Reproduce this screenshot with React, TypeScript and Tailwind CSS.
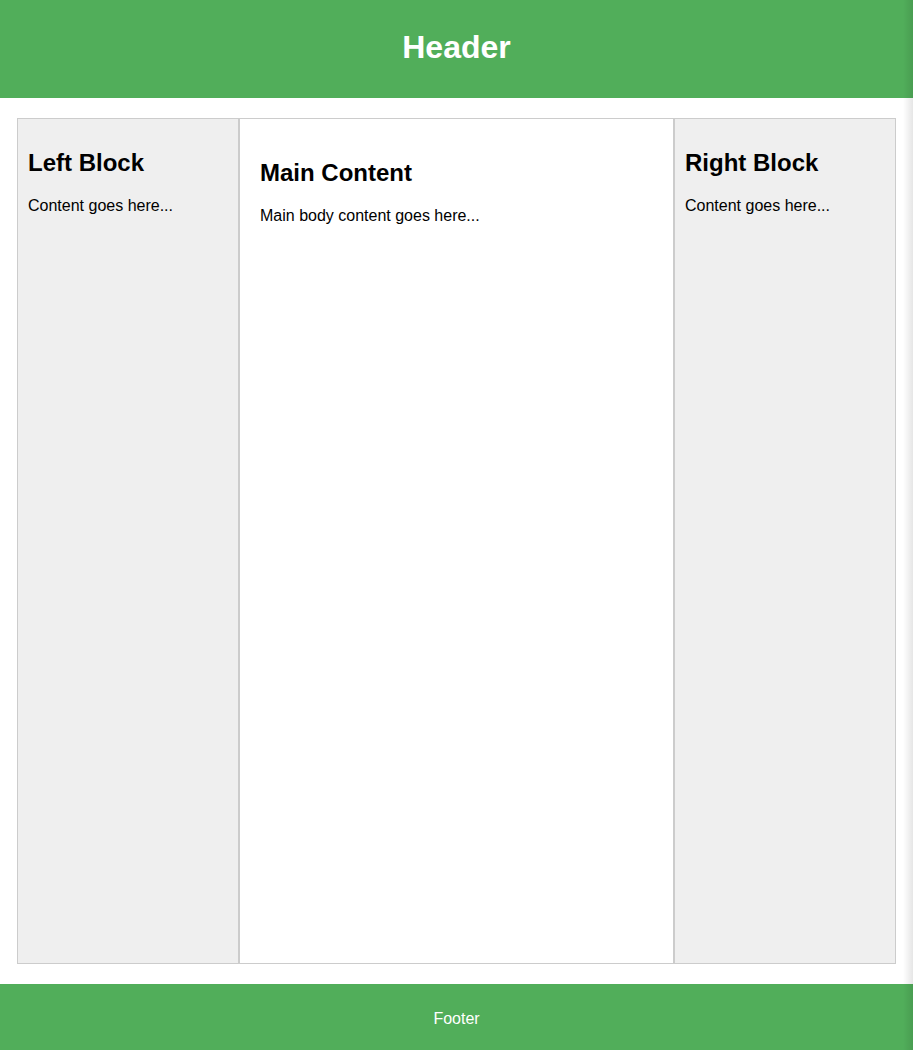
export default function App() {
  return (
    <div className="relative w-full min-h-[1050px] bg-white text-black" style={{ fontFamily: '"Liberation Sans", Arial, sans-serif' }}>
      <header className="h-[98px] bg-[#51ae5a] flex items-center justify-center pb-[4px]">
        <h1 className="text-[32px] font-bold text-white leading-none">Header</h1>
      </header>
      <div className="px-[17px] pt-[20px] pb-[20px]">
        <div className="flex h-[846px]">
          <div className="w-[222px] shrink-0 border border-[#cccccc] bg-[#efefef] px-[10px] pt-[30px]">
            <h2 className="text-[24px] font-bold leading-[28px]">Left Block</h2>
            <p className="mt-[20px] text-[16px] leading-[18px]">Content goes here...</p>
          </div>
          <div className="w-[435px] shrink-0 border border-[#cccccc] bg-white px-[20px] pt-[40px]">
            <h2 className="text-[24px] font-bold leading-[28px]">Main Content</h2>
            <p className="mt-[20px] text-[16px] leading-[18px]">Main body content goes here...</p>
          </div>
          <div className="flex-1 border border-[#cccccc] bg-[#efefef] px-[10px] pt-[30px]">
            <h2 className="text-[24px] font-bold leading-[28px]">Right Block</h2>
            <p className="mt-[20px] text-[16px] leading-[18px]">Content goes here...</p>
          </div>
        </div>
      </div>
      <footer className="h-[66px] bg-[#51ae5a] text-white text-[16px] leading-[18px] flex justify-center pt-[26px]">
        Footer
      </footer>
      <div className="pointer-events-none absolute top-0 right-0 h-full w-[10px] bg-gradient-to-r from-transparent to-black/10" />
    </div>
  );
}
